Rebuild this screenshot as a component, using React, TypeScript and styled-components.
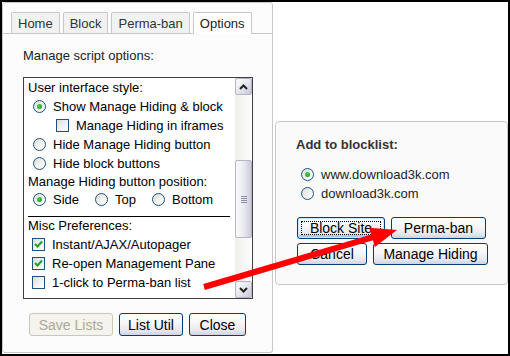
import * as React from 'react'
import styled, { createGlobalStyle, css } from 'styled-components'

const Global = createGlobalStyle`
  html, body {
    margin: 0;
    background: #fff;
  }
  body {
    font-family: "Liberation Sans", Arial, sans-serif;
    font-size: 13px;
    color: #000;
  }
`

const Frame = styled.div`
  position: relative;
  width: 510px;
  height: 356px;
  box-sizing: border-box;
  border: 2px solid #000;
  display: flex;
  align-items: flex-start;
  background: #fff;
`

const LeftPanel = styled.div`
  width: 271px;
  height: 351px;
  box-sizing: border-box;
  border: 1px solid #c8c8c8;
  border-radius: 3px;
  background: #fcfcfc;
  display: flex;
  flex-direction: column;
`

const TabStrip = styled.div`
  display: flex;
  align-items: flex-end;
  gap: 3px;
  padding: 9px 0 0 8px;
  border-bottom: 1px solid #c8c8c8;
`

const Tab = styled.div<{ $active?: boolean }>`
  height: 21px;
  line-height: 21px;
  box-sizing: border-box;
  padding: 0 6px;
  border: 1px solid #c8c8c8;
  border-bottom: none;
  border-radius: 2px 2px 0 0;
  background: #f2f2f2;
  color: #333;

  ${p => p.$active && css`
    height: 22px;
    margin-bottom: -1px;
    background: #fff;
    color: #222;
  `}
`

const Body = styled.div`
  padding-left: 20px;
`

const Intro = styled.div`
  margin-top: 14px;
  line-height: 16px;
  color: #222;
`

const ListBox = styled.div`
  margin-top: 13px;
  width: 230px;
  height: 222px;
  box-sizing: border-box;
  border: 1px solid #404040;
  background: #fff;
  display: flex;
`

const ListContent = styled.div`
  flex: 1;
  padding-left: 4px;
  overflow: hidden;
`

const Heading = styled.div<{ $h?: number }>`
  height: ${p => p.$h ?? 19}px;
  line-height: ${p => p.$h ?? 19}px;
  white-space: nowrap;
`

const Row = styled.label<{ $indent: number; $h?: number }>`
  display: flex;
  align-items: center;
  gap: 7px;
  height: ${p => p.$h ?? 19}px;
  padding-left: ${p => p.$indent}px;
  white-space: nowrap;
`

const InlineItem = styled.span`
  display: flex;
  align-items: center;
  gap: 7px;
  margin-right: 9px;
`

const Separator = styled.hr`
  margin: 8px 5px 0 0;
  border: none;
  border-top: 1px solid #000;
  height: 0;
`

const RadioMark = styled.span<{ $on?: boolean }>`
  position: relative;
  width: 13px;
  height: 13px;
  flex-shrink: 0;
  box-sizing: border-box;
  border: 1px solid #1c5180;
  border-radius: 50%;
  background: linear-gradient(135deg, #dcdcd7 0%, #f4f4f2 60%, #fff 100%);

  ${p => p.$on && css`
    &::after {
      content: '';
      position: absolute;
      left: 3px;
      top: 3px;
      width: 5px;
      height: 5px;
      border-radius: 50%;
      background: radial-gradient(circle at 40% 40%, #55d055, #21a121 70%);
    }
  `}
`

const CheckMark = styled.span`
  width: 13px;
  height: 13px;
  flex-shrink: 0;
  box-sizing: border-box;
  border: 1px solid #1c5180;
  background: linear-gradient(135deg, #dcdcd7 0%, #f4f4f2 60%, #fff 100%);
  display: flex;
  align-items: center;
  justify-content: center;
`

function Radio({ on }: { on?: boolean }) {
  return <RadioMark $on={on} />
}

function Checkbox({ on }: { on?: boolean }) {
  return <CheckMark>
    {on && <svg width='9' height='9' viewBox='0 0 9 9'>
      <path d='M1 4 L3.5 6.5 L8 1.5' fill='none' stroke='#21a121' strokeWidth='2' />
    </svg>}
  </CheckMark>
}

const ScrollBar = styled.div`
  width: 17px;
  display: flex;
  flex-direction: column;
  background: linear-gradient(90deg, #eeeeea, #fdfdfd);
`

const ScrollButton = styled.div`
  width: 17px;
  height: 17px;
  box-sizing: border-box;
  border: 1px solid #b4b4c4;
  border-radius: 2px;
  background: linear-gradient(135deg, #fbfbfd 0%, #e4e4ee 55%, #c6c6d8 100%);
  display: flex;
  align-items: center;
  justify-content: center;
`

const Track = styled.div`
  flex: 1;
  padding-top: 65px;
`

const Thumb = styled.div`
  height: 78px;
  box-sizing: border-box;
  border: 1px solid #b4b4c4;
  border-radius: 2px;
  background: linear-gradient(90deg, #fbfbfd 0%, #e8e8f0 55%, #cacada 100%);
  display: flex;
  flex-direction: column;
  align-items: center;
  justify-content: center;
  gap: 1px;
`

const Grip = styled.span`
  width: 6px;
  height: 1px;
  background: #8e8ea4;
`

function Chevron({ up }: { up?: boolean }) {
  return <svg width='9' height='6' viewBox='0 0 9 6'>
    <path d={up ? 'M1 5 L4.5 1.5 L8 5' : 'M1 1 L4.5 4.5 L8 1'} fill='none' stroke='#222' strokeWidth='2' />
  </svg>
}

const ButtonRow = styled.div<{ $pad: number; $top: number }>`
  display: flex;
  gap: 6px;
  margin-top: ${p => p.$top}px;
  padding-left: ${p => p.$pad}px;
`

const Button = styled.div<{ $w: number; $h?: number; $disabled?: boolean; $focus?: boolean }>`
  position: relative;
  width: ${p => p.$w}px;
  height: ${p => p.$h ?? 22}px;
  box-sizing: border-box;
  border: 1px solid #003c74;
  border-radius: 3px;
  background: linear-gradient(180deg, #ffffff 0%, #f6f6f8 45%, #e6e6ee 80%, #d2d2e2 100%);
  display: flex;
  align-items: center;
  justify-content: center;
  color: #000;
  font-size: 14px;

  ${p => p.$disabled && css`
    border-color: #c9c7ba;
    background: #f4f3ee;
    color: #aca899;
  `}

  ${p => p.$focus && css`
    box-shadow: inset 0 0 0 1px #cee7ff, inset 0 -2px 0 1px #a8caf4;
    &::after {
      content: '';
      position: absolute;
      inset: 3px 3px 3px 3px;
      border: 1px dotted #000;
    }
  `}
`

const RightPanel = styled.div`
  margin: 119px 0 0 2px;
  width: 233px;
  height: 164px;
  box-sizing: border-box;
  border: 1px solid #c8c8c8;
  border-radius: 4px;
  background: #fafafa;
  padding: 15px 0 0 20px;
`

const Title = styled.div`
  font-weight: bold;
  line-height: 16px;
  color: #333;
`

const ChoiceList = styled.div`
  margin-top: 12px;
  color: #222;
`

const Overlay = styled.svg`
  position: absolute;
  left: -2px;
  top: -2px;
  pointer-events: none;
`

function Arrow() {
  const x1 = 204, y1 = 287, tx = 397, ty = 230
  const dx = tx - x1, dy = ty - y1
  const len = Math.hypot(dx, dy)
  const ux = dx / len, uy = dy / len
  const nx = -uy, ny = ux
  const headLen = 26, half = 10
  const bx = tx - ux * headLen, by = ty - uy * headLen
  const pts = `${tx},${ty} ${bx + nx * half},${by + ny * half} ${bx - nx * half},${by - ny * half}`
  return <Overlay width='510' height='356' viewBox='0 0 510 356'>
    <line x1={x1} y1={y1} x2={bx + ux * 2} y2={by + uy * 2} stroke='#ff0000' strokeWidth='6' />
    <polygon points={pts} fill='#ff0000' />
  </Overlay>
}

export default function App() {
  return <>
    <Global />
    <Frame>
      <LeftPanel>
        <TabStrip>
          <Tab>Home</Tab>
          <Tab>Block</Tab>
          <Tab>Perma-ban</Tab>
          <Tab $active>Options</Tab>
        </TabStrip>
        <Body>
          <Intro>Manage script options:</Intro>
          <ListBox>
            <ListContent>
              <Heading>User interface style:</Heading>
              <Row $indent={5}><Radio on />Show Manage Hiding &amp; block</Row>
              <Row $indent={28}><Checkbox />Manage Hiding in iframes</Row>
              <Row $indent={5}><Radio />Hide Manage Hiding button</Row>
              <Row $indent={5}><Radio />Hide block buttons</Row>
              <Heading $h={17}>Manage Hiding button position:</Heading>
              <Row $indent={5} $h={18}>
                <InlineItem><Radio on />Side</InlineItem>
                <InlineItem><Radio />Top</InlineItem>
                <InlineItem><Radio />Bottom</InlineItem>
              </Row>
              <Separator />
              <Heading $h={18}>Misc Preferences:</Heading>
              <Row $indent={4}><Checkbox on />Instant/AJAX/Autopager</Row>
              <Row $indent={4}><Checkbox on />Re-open Management Pane</Row>
              <Row $indent={4}><Checkbox />1-click to Perma-ban list</Row>
            </ListContent>
            <ScrollBar>
              <ScrollButton><Chevron up /></ScrollButton>
              <Track>
                <Thumb><Grip /><Grip /><Grip /><Grip /></Thumb>
              </Track>
              <ScrollButton><Chevron /></ScrollButton>
            </ScrollBar>
          </ListBox>
          <ButtonRow $pad={6} $top={14}>
            <Button $w={84} $h={23} $disabled>Save Lists</Button>
            <Button $w={64} $h={23}>List Util</Button>
            <Button $w={57} $h={23}>Close</Button>
          </ButtonRow>
        </Body>
      </LeftPanel>
      <RightPanel>
        <Title>Add to blocklist:</Title>
        <ChoiceList>
          <Row $indent={5}><Radio on />www.download3k.com</Row>
          <Row $indent={5}><Radio />download3k.com</Row>
        </ChoiceList>
        <ButtonRow $pad={1} $top={14}>
          <Button $w={88} $focus>Block Site</Button>
          <Button $w={95}>Perma-ban</Button>
        </ButtonRow>
        <ButtonRow $pad={1} $top={4}>
          <Button $w={70}>Cancel</Button>
          <Button $w={115}>Manage Hiding</Button>
        </ButtonRow>
      </RightPanel>
      <Arrow />
    </Frame>
  </>
}
